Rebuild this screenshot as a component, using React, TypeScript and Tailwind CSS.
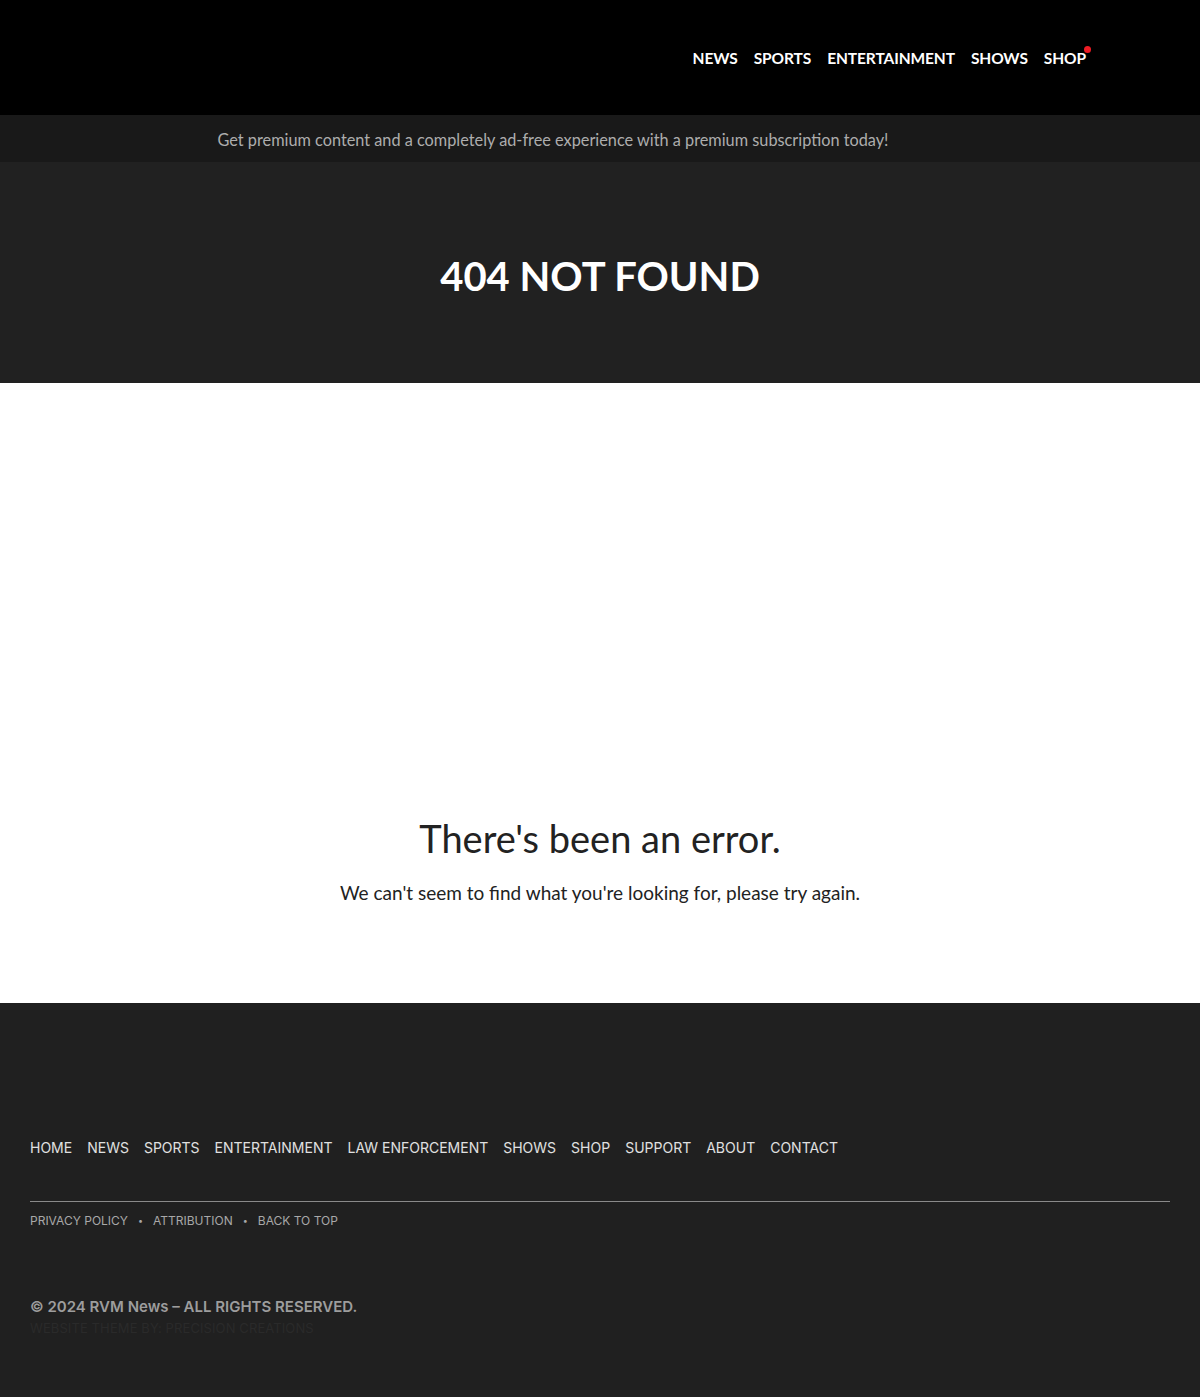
const headerLinks = ["NEWS", "SPORTS", "ENTERTAINMENT", "SHOWS", "SHOP"];

const footerLinks = [
  "HOME",
  "NEWS",
  "SPORTS",
  "ENTERTAINMENT",
  "LAW ENFORCEMENT",
  "SHOWS",
  "SHOP",
  "SUPPORT",
  "ABOUT",
  "CONTACT",
];

const App = () => {
  return (
    <div className="min-h-screen flex flex-col bg-white font-['Lato',sans-serif]">
      {/* header */}
      <header className="h-[115px] bg-black flex items-center justify-end pr-[114px]">
        <nav className="flex items-center gap-[16px] pt-[2px]">
          {headerLinks.map((link) => (
            <a
              key={link}
              className="relative text-white text-[15.5px] font-bold tracking-[-0.1px]"
            >
              {link}
              {link === "SHOP" && (
                <span className="absolute -top-[1px] -right-[5px] w-[7px] h-[7px] rounded-full bg-[#ee1c24]" />
              )}
            </a>
          ))}
        </nav>
      </header>

      {/* promo bar */}
      <div className="h-[47px] bg-[#191919] flex items-center justify-center pr-[94px] pt-[3px]">
        <p className="text-[#adadad] text-[16.3px]">
          Get premium content and a completely ad-free experience with a premium subscription today!
        </p>
      </div>

      {/* title */}
      <section className="h-[221px] bg-[#212121] flex items-center justify-center">
        <h1 className="text-white text-[40px] font-bold leading-none pt-[6px]">404 NOT FOUND</h1>
      </section>

      {/* error message */}
      <main className="h-[620px] flex flex-col items-center justify-end pb-[96px] text-[#222]">
        <h2 className="text-[38px] leading-none mb-[22px]">There's been an error.</h2>
        <p className="text-[19px]">We can't seem to find what you're looking for, please try again.</p>
      </main>

      {/* footer */}
      <footer className="flex-1 bg-[#202020] px-[30px] pt-[134px] pb-[60px] font-['Inter',sans-serif]">
        <nav className="flex items-center gap-[15px]">
          {footerLinks.map((link) => (
            <a key={link} className="text-[#e0e0e0] text-[14px]">
              {link}
            </a>
          ))}
        </nav>

        <div className="mt-[43px] border-t border-[#8a8a8a]" />

        <div className="mt-[10px] flex items-center gap-[10px] text-[#a8a8a8] text-[12px]">
          <a>PRIVACY POLICY</a>
          <span className="text-[9px]">•</span>
          <a>ATTRIBUTION</a>
          <span className="text-[9px]">•</span>
          <a>BACK TO TOP</a>
        </div>

        <p className="mt-[66px] text-[#9d9d9d] text-[15px] font-semibold">
          © 2024 RVM News – ALL RIGHTS RESERVED.
        </p>
        <p className="mt-[0px] text-[#2a2a2a] text-[13px] tracking-[0.1px]">
          WEBSITE THEME BY: PRECISION CREATIONS
        </p>
      </footer>
    </div>
  );
};

export default App;
